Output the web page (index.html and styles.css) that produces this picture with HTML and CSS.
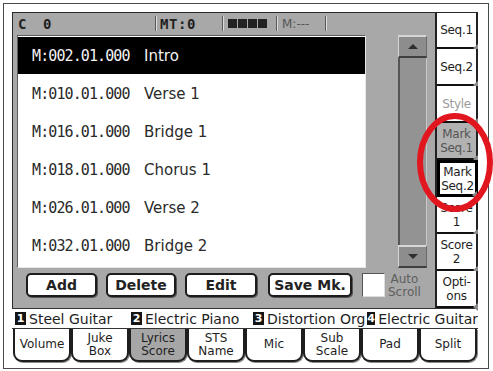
FILE: index.html
```html
<!DOCTYPE html>
<html lang="en">
<head>
    <meta charset="UTF-8">
    <meta name="viewport" content="width=device-width, initial-scale=1.0">
    <title>Song Marker</title>
    <link rel="stylesheet" href="styles.css">
</head>
<body>
    <div class="frame">
        <div class="top">
            <div class="panel">
                <!-- status line -->
                <div class="status">
                    <span class="st-key">C</span>
                    <span class="st-num">0</span>
                    <span class="st-sep"></span>
                    <span class="st-mt">MT:0</span>
                    <span class="st-sep"></span>
                    <span class="st-blocks"><i></i><i></i><i></i><i></i></span>
                    <span class="st-sep"></span>
                    <span class="st-meas">M:---</span>
                    <span class="st-sep"></span>
                </div>

                <div class="body">
                    <ul class="markers">
                        <li class="sel"><span class="pos">M:002.01.000</span>Intro</li>
                        <li><span class="pos">M:010.01.000</span>Verse 1</li>
                        <li><span class="pos">M:016.01.000</span>Bridge 1</li>
                        <li><span class="pos">M:018.01.000</span>Chorus 1</li>
                        <li><span class="pos">M:026.01.000</span>Verse 2</li>
                        <li><span class="pos">M:032.01.000</span>Bridge 2</li>
                    </ul>
                    <div class="scroll">
                        <div class="sb-btn up"></div>
                        <div class="sb-track"></div>
                        <div class="sb-btn down"></div>
                    </div>
                </div>

                <div class="actions">
                    <button class="btn btn-add">Add</button>
                    <button class="btn btn-del">Delete</button>
                    <button class="btn btn-edit">Edit</button>
                    <button class="btn btn-save">Save Mk.</button>
                    <span class="check"></span>
                    <span class="auto">Auto<br>Scroll</span>
                </div>
            </div>

            <div class="side">
                <div class="stab">Seq.1</div>
                <div class="stab">Seq.2</div>
                <div class="stab off">Style</div>
                <div class="stab dim">Mark<br>Seq.1</div>
                <div class="stab active">Mark<br>Seq.2</div>
                <div class="stab">Score<br>1</div>
                <div class="stab">Score<br>2</div>
                <div class="stab">Opti-<br>ons</div>
            </div>
        </div>

        <div class="tracks">
            <span class="trk"><b class="tn">1</b>Steel Guitar</span>
            <span class="trk"><b class="tn">2</b>Electric Piano</span>
            <span class="trk"><b class="tn">3</b>Distortion Org</span>
            <span class="trk"><b class="tn">4</b>Electric Guitar</span>
        </div>

        <div class="tabs">
            <div class="btab">Volume</div>
            <div class="btab">Juke<br>Box</div>
            <div class="btab cur">Lyrics<br>Score</div>
            <div class="btab">STS<br>Name</div>
            <div class="btab">Mic</div>
            <div class="btab">Sub<br>Scale</div>
            <div class="btab">Pad</div>
            <div class="btab">Split</div>
        </div>
    </div>

    <!-- red marking over the Mark Seq. tabs -->
    <svg class="mark-circle" width="493" height="371" viewBox="0 0 493 371">
        <ellipse cx="455" cy="162.5" rx="35" ry="46.5" fill="none" stroke="#e2161f" stroke-width="6"/>
    </svg>
</body>
</html>
```

FILE: styles.css
```css
* {
    box-sizing: border-box;
}

body {
    margin: 0;
    background: #fff;
    font-family: "DejaVu Sans", Verdana, sans-serif;
    color: #1e1e1e;
}

.frame {
    margin: 3px 0 0 3px;
    width: 486px;
    height: 366px;
    border: 1px solid #4a4a4a;
    padding: 8px 10px 0 8px;
}

.top {
    display: flex;
    height: 296px;
}

.panel {
    width: 423px;
    background: #a8a8a8;
    border-left: 1px solid #2a2a2a;
    border-top: 1px solid #2a2a2a;
}

/* status line */
.status {
    display: flex;
    align-items: center;
    height: 21px;
    padding-left: 5px;
    font-family: "DejaVu Sans Mono", monospace;
    font-weight: bold;
    font-size: 14px;
    color: #222;
}
.st-key { width: 25px; }
.st-num { width: 112px; }
.st-sep {
    width: 2px;
    height: 15px;
    border-left: 1px solid #5a5a5a;
    border-right: 1px solid #dcdcdc;
}
.st-mt {
    width: 65px;
    padding-left: 3px;
    letter-spacing: 0.6px;
}
.st-blocks {
    display: flex;
    gap: 1px;
    width: 52px;
    padding-left: 4px;
}
.st-blocks i {
    width: 9px;
    height: 9px;
    background: #222;
}
.st-meas {
    width: 47px;
    padding-left: 4px;
    font-family: "DejaVu Sans", sans-serif;
    font-weight: normal;
    font-size: 12px;
    color: #555;
}

/* marker list + scrollbar */
.body {
    display: flex;
    height: 234px;
    padding-top: 1px;
}
.markers {
    list-style: none;
    margin: 0 0 0 4px;
    padding: 1px 0 0;
    width: 349px;
    height: 233px;
    background: #fff;
    border: 1px solid;
    border-color: #5c5c5c #e8e8e8 #e8e8e8 #5c5c5c;
}
.markers li {
    display: flex;
    align-items: center;
    height: 38px;
    padding-left: 14px;
    font-size: 15px;
    color: #2a2a2a;
}
.markers li.sel {
    background: #000;
    color: #f2f2f2;
    height: 37px;
    margin-bottom: 1px;
}
.pos {
    width: 112px;
    font-family: "DejaVu Sans Mono", monospace;
    letter-spacing: -0.9px;
}

.scroll {
    display: flex;
    flex-direction: column;
    width: 29px;
    height: 233px;
    margin-left: 32px;
}
.sb-btn {
    display: flex;
    align-items: center;
    justify-content: center;
    height: 23px;
    background: #8d8d8d;
    border-top: 2px solid #d6d6d6;
    border-left: 1px solid #d6d6d6;
    border-right: 1px solid #6a6a6a;
    border-bottom: 2px solid #3e3e3e;
}
.sb-btn::before {
    content: "";
    border-left: 5px solid transparent;
    border-right: 5px solid transparent;
}
.sb-btn.up::before { border-bottom: 5px solid #2e2e2e; }
.sb-btn.down::before { border-top: 5px solid #2e2e2e; }
.sb-track {
    flex: 1;
    background: #939393;
    border-left: 2px solid #555;
    border-right: 1px solid #c8c8c8;
}

/* buttons row */
.actions {
    display: flex;
    align-items: flex-start;
    height: 40px;
    padding: 5px 0 0 13px;
}
.btn {
    height: 24px;
    padding: 0;
    margin-right: 9px;
    background: #fff;
    border: 2px solid #1c1c1c;
    border-radius: 5px;
    box-shadow: 1px 1px 0 #555;
    font-family: "DejaVu Sans", sans-serif;
    font-weight: bold;
    font-size: 14px;
    color: #222;
}
.btn-add { width: 71px; }
.btn-del { width: 70px; }
.btn-edit { width: 72px; margin-right: 11px; }
.btn-save { width: 84px; margin-right: 10px; }
.check {
    width: 23px;
    height: 24px;
    background: #fff;
    border: 1px solid;
    border-color: #555 #ddd #ddd #555;
}
.auto {
    margin-left: 3px;
    font-size: 12px;
    line-height: 13px;
    text-align: center;
    color: #5e5e5e;
}

/* right-hand tabs */
.side {
    width: 43px;
    border-left: 2px solid #222;
    border-top: 1px solid #2a2a2a;
}
.stab {
    position: relative;
    display: flex;
    align-items: center;
    justify-content: center;
    height: 37px;
    background: #fff;
    border-right: 2px solid #222;
    border-bottom: 2px solid #111;
    font-size: 12px;
    line-height: 14px;
    text-align: center;
    letter-spacing: -0.3px;
}
.stab:first-child { height: 36px; }
.stab::after {
    content: "";
    position: absolute;
    right: -2px;
    bottom: -5px;
    border-top: 4px solid transparent;
    border-bottom: 4px solid transparent;
    border-right: 5px solid #8a8a8a;
}
.stab.off { color: #9c9c9c; }
.stab.dim {
    background: #b2b2b2;
    color: #555;
}
.stab.active {
    border: 3px solid #000;
}

/* track names */
.tracks {
    display: grid;
    grid-template-columns: 116px 122px 114px 1fr;
    align-items: center;
    height: 21px;
    padding-left: 3px;
    border-top: 1px solid #333;
    border-bottom: 1px solid #333;
    font-size: 14px;
    white-space: nowrap;
    overflow: hidden;
}
.trk {
    display: flex;
    align-items: center;
    overflow: hidden;
}
.tn {
    display: inline-flex;
    align-items: center;
    justify-content: center;
    width: 11px;
    height: 13px;
    margin-right: 3px;
    background: #151515;
    color: #fff;
    font-size: 11px;
}

/* bottom tabs */
.tabs {
    display: flex;
    height: 34px;
    padding-left: 1px;
}
.btab {
    display: flex;
    align-items: center;
    justify-content: center;
    width: 58px;
    height: 33px;
    background: #fff;
    border: 2px solid #1e1e1e;
    border-top: none;
    border-radius: 0 0 9px 9px;
    box-shadow: 1px 1px 0 #8a8a8a;
    font-size: 12px;
    line-height: 13px;
    text-align: center;
}
.btab.cur { background: #a6a6a6; }

.mark-circle {
    position: absolute;
    left: 0;
    top: 0;
    pointer-events: none;
}
```
